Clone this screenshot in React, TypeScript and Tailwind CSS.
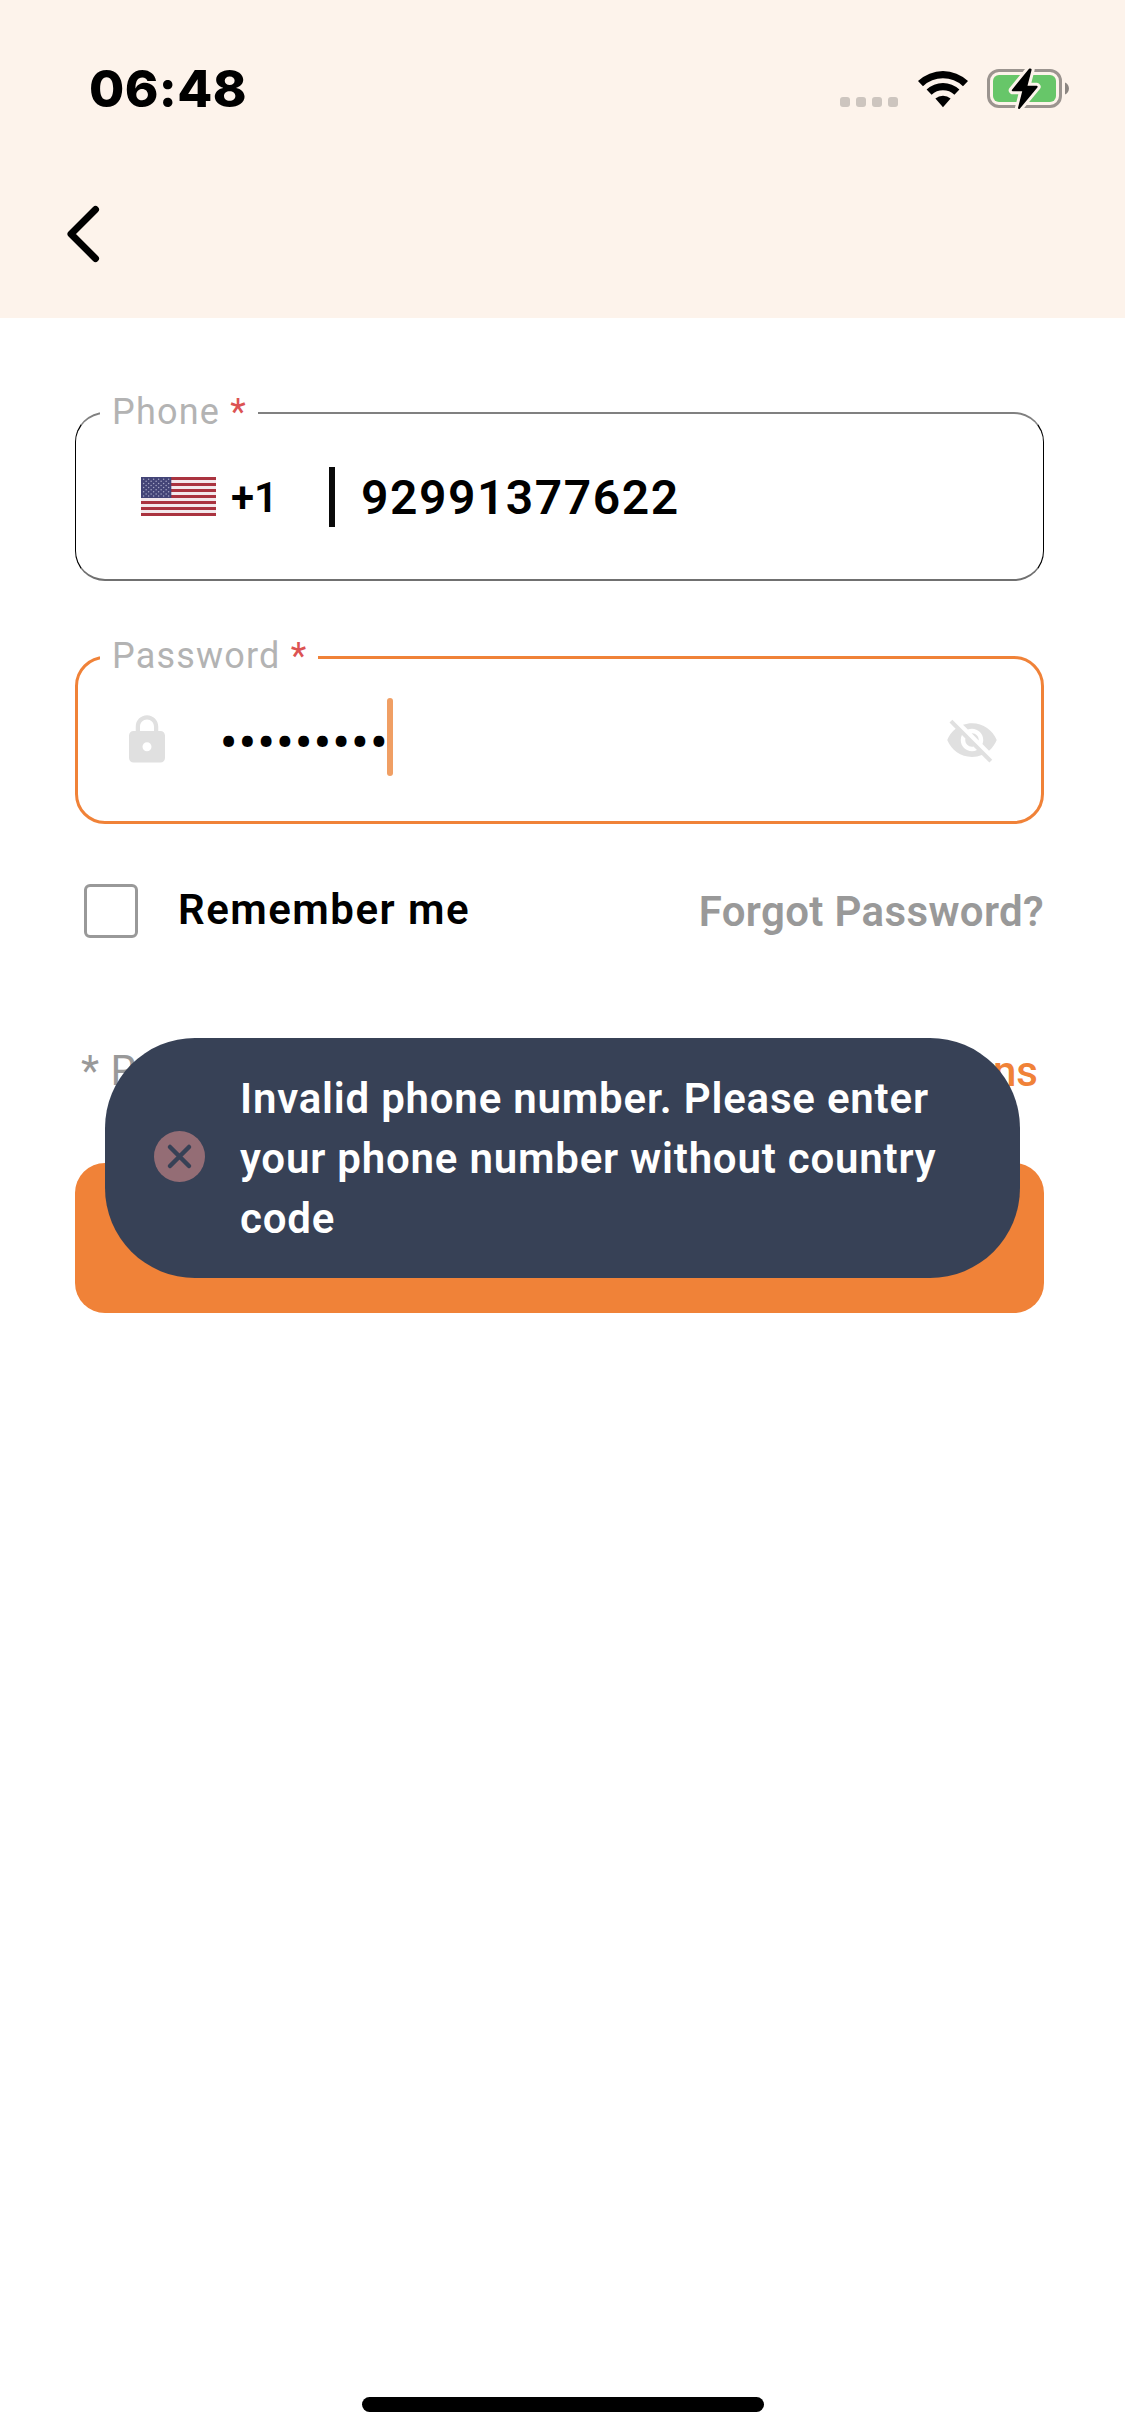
import { MdLock, MdVisibilityOff } from "react-icons/md";

function WifiIcon() {
  return (
    <svg width="52" height="38" viewBox="0 0 52 38" className="block">
      <path d="M1 11 A36.5 36.5 0 0 1 51 11 L46 16.2 A29.3 29.3 0 0 0 6 16.2 Z" fill="#000" />
      <path d="M9.6 19.6 A24 24 0 0 1 42.4 19.6 L37.4 24.7 A17 17 0 0 0 14.6 24.7 Z" fill="#000" />
      <path d="M18.4 28.6 A11.5 11.5 0 0 1 33.6 28.6 L26 37.2 Z" fill="#000" />
    </svg>
  );
}

function BatteryIcon() {
  return (
    <svg width="84" height="44" viewBox="0 0 84 44" className="block">
      <rect x="1.5" y="3.5" width="72" height="36" rx="10.5" fill="none" stroke="#9b948f" strokeWidth="3" />
      <rect x="6" y="8" width="63" height="27" rx="6" fill="#67c669" />
      <path d="M78 15.5 C83.3 17.5 83.3 25.5 78 27.5 Z" fill="#8b8581" />
      <path
        d="M42.8 2.5 L25.8 23.3 H36.5 L32 41 L49.6 19.8 H39.2 L43.6 2.8 Z"
        fill="#fdf3eb"
        stroke="#fdf3eb"
        strokeWidth="8"
        strokeLinejoin="round"
      />
      <path
        d="M42.8 2.5 L25.8 23.3 H36.5 L32 41 L49.6 19.8 H39.2 L43.6 2.8 Z"
        fill="#000"
        stroke="#000"
        strokeWidth="2"
        strokeLinejoin="round"
      />
    </svg>
  );
}

function UsFlag() {
  const stars = [];
  for (let row = 0; row < 9; row++) {
    const count = row % 2 === 0 ? 6 : 5;
    for (let i = 0; i < count; i++) {
      stars.push(
        <circle
          key={`${row}-${i}`}
          cx={2.6 + i * 5 + (row % 2 === 0 ? 0 : 2.5)}
          cy={2.2 + row * 2.1}
          r="0.75"
          fill="#a5a6c4"
        />,
      );
    }
  }
  return (
    <svg width="75" height="39" viewBox="0 0 75 39" className="block">
      <rect width="75" height="39" fill="#f3e9ec" />
      {[0, 1, 2, 3, 4, 5, 6].map((n) => (
        <rect key={n} y={n * 6} width="75" height="3" fill="#aa333f" />
      ))}
      <rect width="30.3" height="21" fill="#434477" />
      {stars}
    </svg>
  );
}

function FieldLabel({ children, className }: { children: string; className: string }) {
  return (
    <span
      className={`absolute whitespace-pre bg-white pl-[12px] pr-[11px] text-[36px] leading-[42px] tracking-[1.2px] text-[#b3b3b3] ${className}`}
    >
      {children} <span className="text-[#dc5353]">*</span>
    </span>
  );
}

export default function App() {
  return (
    <div className="relative flex h-[2436px] w-[1125px] flex-col overflow-hidden bg-white font-['Roboto',sans-serif]">
      <header className="h-[318px] bg-[#fdf3eb]">
        <div className="flex items-start justify-between pl-[89px] pr-[54px]">
          <div className="mt-[59px] font-['Inter',sans-serif] text-[51px] font-extrabold leading-[60px] tracking-[0.4px] text-black">
            06:48
          </div>
          <div className="flex items-start">
            <div className="mr-[19px] mt-[97px] flex gap-[6px]">
              {[0, 1, 2, 3].map((n) => (
                <span key={n} className="size-[10px] rounded-[3px] bg-[#cdc5bf]" />
              ))}
            </div>
            <div className="mr-[18px] mt-[70px]">
              <WifiIcon />
            </div>
            <div className="mt-[67px]">
              <BatteryIcon />
            </div>
          </div>
        </div>
        <button aria-label="Back" className="ml-[66px] mt-[86px] block">
          <svg width="36" height="58" viewBox="0 0 36 58" className="block">
            <path d="M29.5 4.5 L5 29 L29.5 53.5" fill="none" stroke="#000" strokeWidth="7" strokeLinecap="round" strokeLinejoin="round" />
          </svg>
        </button>
      </header>

      <main className="flex flex-col pl-[75px] pr-[81px]">
        <div className="relative mt-[94px] flex h-[169px] items-center rounded-[30px] border border-y-[2px] border-x-black border-t-[#808080] border-b-[#707070] pl-[65px]">
          <FieldLabel className="-top-[23px] left-[24px]">Phone</FieldLabel>
          <UsFlag />
          <span className="ml-[15px] w-[98px] pt-[2px] text-[42px] font-semibold leading-[50px] text-black">+1</span>
          <span className="h-[60px] w-[6px] bg-[#0a0a0a]" />
          <span className="ml-[26px] pt-[3px] text-[48px] font-semibold leading-[56px] tracking-[1.55px] text-black">92991377622</span>
        </div>

        <div className="relative mt-[75px] flex h-[168px] items-center rounded-[30px] border-[3px] border-[#f08238] pl-[42px] pr-[42px]">
          <FieldLabel className="-top-[24px] left-[22px]">Password</FieldLabel>
          <MdLock className="size-[54px] text-[#e0e0e0]" />
          <span className="ml-[46px] w-[167px] whitespace-nowrap pt-[6px] text-[48px] font-semibold leading-[56px] tracking-[1.75px] text-black">
            •••••••••
          </span>
          <span className="mb-[6px] h-[78px] w-[6px] rounded-full bg-[#f09f64]" />
          <MdVisibilityOff className="ml-auto size-[54px] text-[#e0e0e0]" />
        </div>

        <div className="mt-[59px] flex h-[56px] items-start justify-between">
          <label className="flex items-start">
            <span className="ml-[9px] mt-px size-[54px] rounded-[6px] border-[3px] border-[#999]" />
            <span className="ml-[40px] text-[42px] font-[650] leading-[54px] tracking-[1.5px] text-black">Remember me</span>
          </label>
          <a className="mt-[2px] text-[42px] font-[650] leading-[54px] tracking-[0.35px] text-[#999]">Forgot Password?</a>
        </div>

        <div className="mt-[107px] flex h-[50px] items-start justify-between pl-[6px] pr-[6px]">
          <span className="text-[42px] leading-[50px] tracking-[0.5px] text-[#999]">* Required</span>
          <span className="pt-px text-[42px] font-medium leading-[50px] text-[#f08238]">Terms &amp; Conditions</span>
        </div>

        <button aria-label="Login" className="mt-[67px] h-[150px] rounded-[30px] bg-[#f08238]" />
      </main>

      <div className="absolute left-[105px] top-[1038px] flex h-[240px] w-[915px] items-center rounded-[90px] bg-[#374156] pl-[49px]">
        <svg width="51" height="51" viewBox="0 0 51 51" className="mb-[3px] shrink-0">
          <circle cx="25.5" cy="25.5" r="25.5" fill="#946d75" />
          <path d="M16 16 L35 35 M35 16 L16 35" stroke="#374156" strokeWidth="4.5" strokeLinecap="round" />
        </svg>
        <p className="ml-[35px] whitespace-nowrap pt-[2px] text-[42px] font-[650] leading-[60px] tracking-[0.8px] text-white">
          Invalid phone number. Please enter
          <br />
          your phone number without country
          <br />
          code
        </p>
      </div>

      <div className="mx-auto mb-[24px] mt-auto h-[15px] w-[402px] rounded-full bg-black" />
    </div>
  );
}
